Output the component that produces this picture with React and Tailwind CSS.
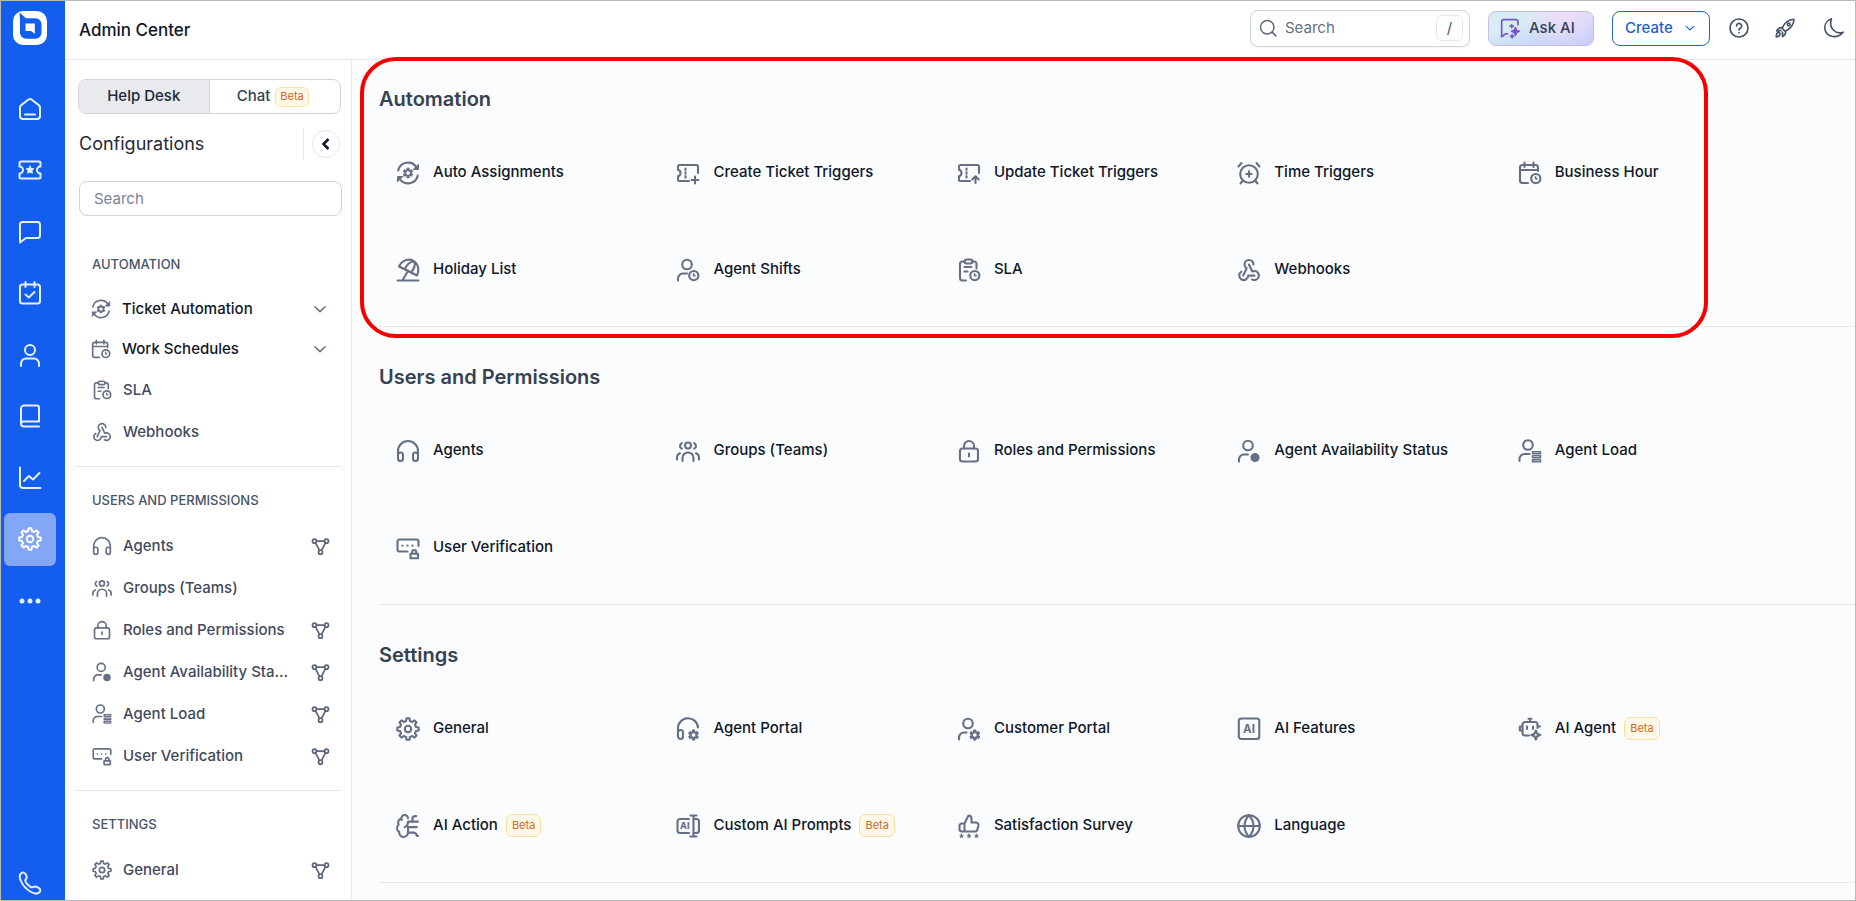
import React, { useState } from 'react'
import clsx from 'clsx'

// outline of a cog with its centre at cx, cy
function gearPath(cx, cy, teeth, outer, inner) {
  const step = (Math.PI * 2) / teeth
  const points = []
  for (let i = 0; i < teeth; i++) {
    const a = i * step - Math.PI / 2
    const corners = [[-0.3, inner], [-0.17, outer], [0.17, outer], [0.3, inner]]
    corners.forEach(([off, r]) => {
      points.push(`${(cx + r * Math.cos(a + off * step)).toFixed(2)} ${(cy + r * Math.sin(a + off * step)).toFixed(2)}`)
    })
  }
  return `M${points.join('L')}Z`
}

function starPath(cx, cy, r) {
  const points = []
  for (let i = 0; i < 10; i++) {
    const a = (i * Math.PI) / 5 - Math.PI / 2
    const d = i % 2 ? r * 0.5 : r
    points.push(`${(cx + d * Math.cos(a)).toFixed(2)} ${(cy + d * Math.sin(a)).toFixed(2)}`)
  }
  return `M${points.join('L')}Z`
}

const smallGear = (cx, cy) => <path d={gearPath(cx, cy, 6, 4.6, 2.7)} strokeWidth="1.9" />

const smallClock = (
  <>
    <circle cx="17.8" cy="17.6" r="4.6" />
    <path d="M17.6 15.8v2h1.5" strokeWidth="1.5" />
  </>
)

const ticket = <path d="M22 12V5.5A1.5 1.5 0 0 0 20.5 4H3.6A1.6 1.6 0 0 0 2 5.6V8.8a3.3 3.3 0 0 1 0 6.4v3.2A1.6 1.6 0 0 0 3.6 20H13M9.5 7.5v1.5M9.5 11.3v1.5M9.5 15.1v1.5" />

const headset = <path d="M2 18v-6a10 10 0 0 1 20 0v6M2 17.5v-1.5a2.5 2.5 0 0 1 5 0v3.500a2.500 2.500 0 0 1-5 0zM22 17.500v-1.500a2.500 2.500 0 0 0-5 0v3.500a2.500 2.500 0 0 0 5 0z" />

const icons = {
  autoAssign: (
    <>
      <path d="M2.2 9.5A10 10 0 0 1 20.5 6.5M21.8 14.5A10 10 0 0 1 3.5 17.5" />
      <path d="M22.5 3.5v5h-5zM1.5 20.5v-5h5z" fill="currentColor" strokeWidth="1" />
      <path d={gearPath(12, 12, 6, 4.4, 2.6)} strokeWidth="1.7" />
    </>
  ),
  ticketPlus: <>{ticket}<path d="M19 15.5v7M15.5 19h7" /></>,
  ticketUp: <>{ticket}<path d="M18.5 22v-6.5M15.3 18.5l3.2-3.2 3.2 3.2" /></>,
  alarm: (
    <>
      <circle cx="12" cy="13" r="8.8" />
      <path d="M12 10.3v5.4M9.3 13h5.4M1.5 5.5L4.5 2M22.5 5.5L19.5 2M5.5 20L3.5 22.5M18.5 20l2 2.5" />
    </>
  ),
  calendarClock: (
    <>
      <path d="M10 22H4.5A2.5 2.5 0 0 1 2 19.5V6.5A2.5 2.5 0 0 1 4.5 4h13A2.5 2.5 0 0 1 20 6.5V10M2 9h18M6.5 1.5v4.5M15.5 1.5v4.5" />
      {smallClock}
    </>
  ),
  umbrella: (
    <path d="M3 8.5C6.5 1.5 14 0 18.5 3.5c4.5 3.5 4.5 9.5 2.5 14zM3 8.5c4 1.5 14 7 18 9M9 11.5c1-4 5-8.5 9.5-8M15 14.8c3-4 4.5-8.5 3.5-11.3M12 13L6.5 22.3M1.5 22.5h21" />
  ),
  agentClock: (
    <>
      <circle cx="11" cy="6.5" r="4.8" />
      <path d="M2 22.5v-2a5 5 0 0 1 5-5h4" />
      {smallClock}
    </>
  ),
  clipboardClock: (
    <>
      <path d="M15.5 3.5h1.5A2.5 2.5 0 0 1 19.5 6v4.5M8 3.5H5.5A2.5 2.5 0 0 0 3 6v14A2.5 2.5 0 0 0 5.5 22.5H9M7.5 9h7M7.5 13.5h3" />
      <rect x="7.5" y="1.5" width="8" height="4" rx="2" />
      {smallClock}
    </>
  ),
  webhook: (
    <>
      <path d="M4.4 13.7a4.5 4.5 0 1 0 6.8 3.9H17.5" />
      <path d="M15 21.3a4.5 4.5 0 1 0 2.5-8.3c-.8 0-1.6.2-2.2.5L12 6.5" />
      <path d="M16.5 6.5a4.5 4.5 0 1 0-9 0c0 1.7.8 3.2 2.1 4L6.2 17.5" />
    </>
  ),
  headset,
  groups: (
    <>
      <circle cx="12" cy="6.5" r="3" />
      <path d="M6.5 22v-3a5.5 5.5 0 0 1 11 0v3M1 20.5v-2a4.5 4.5 0 0 1 3-4.2M23 20.5v-2a4.5 4.5 0 0 0-3-4.2M5.8 4.2a3 3 0 0 0 0 5.5M18.2 4.2a3 3 0 0 1 0 5.5" />
    </>
  ),
  lock: (
    <>
      <rect x="3" y="9.5" width="18" height="13" rx="2.5" />
      <path d="M7 9.5V7a5 5 0 0 1 10 0v2.5M12 14.5v3" />
    </>
  ),
  agentStatus: (
    <>
      <circle cx="11" cy="6.5" r="4.8" />
      <path d="M2 22.5v-2a5 5 0 0 1 5-5h4" />
      <circle cx="18" cy="18.5" r="3.5" fill="currentColor" />
    </>
  ),
  agentLoad: (
    <>
      <circle cx="10" cy="6" r="4.8" />
      <path d="M1.5 22v-2a5 5 0 0 1 5-5h5" />
      <path d="M14.5 12.8h8v2h-8zM14.5 16.8h8v2h-8zM14.5 20.8h8v2h-8z" strokeWidth="1.5" />
    </>
  ),
  verification: (
    <>
      <path d="M11.5 15.5H3.5a2 2 0 0 1-2-2V5.5a2 2 0 0 1 2-2h17a2 2 0 0 1 2 2v4.5M6.5 9.6v.1M11.5 9.6v.1M16.5 9.6v.1" />
      <path d="M14.5 17.8h7.5v4.5h-7.5zM16.2 17.5v-1.5a2 2 0 0 1 4 0v1.5" />
    </>
  ),
  gear: (
    <>
      <path d={gearPath(12, 12, 8, 10.8, 8.2)} />
      <circle cx="12" cy="12" r="3.2" />
    </>
  ),
  agentPortal: (
    <>
      <path d="M22 10.5A10 10 0 0 0 2 12v7.5a2.5 2.5 0 0 0 5 0v-4a2.5 2.5 0 0 0-5 0" />
      {smallGear(17.5, 18)}
    </>
  ),
  customerPortal: (
    <>
      <circle cx="11" cy="6.5" r="4.8" />
      <path d="M2 22.5v-2a5 5 0 0 1 5-5h2.5" />
      {smallGear(17.8, 18)}
    </>
  ),
  aiBox: (
    <>
      <rect x="1.8" y="1.5" width="20.5" height="20.5" rx="2.5" />
      <text x="12" y="16" textAnchor="middle" fontSize="11.5" fontWeight="700" fill="currentColor" stroke="none">AI</text>
    </>
  ),
  robot: (
    <>
      <path d="M12 5V1.8M10.5 1.8h3M11 18.5H7A2.5 2.5 0 0 1 4.5 16V7.5A2.5 2.5 0 0 1 7 5h10a2.5 2.5 0 0 1 2.5 2.5V11M9 9.5v2.5M15 9.5v2.5M4.5 9.5H1.8v4h2.7M19.5 9.5H22" />
      <path d="M17.8 13.5l1.3 3.2 3.2 1.3-3.2 1.3-1.3 3.2-1.3-3.2-3.2-1.3 3.2-1.3z" />
    </>
  ),
  brain: (
    <g transform="translate(-1.2 -1.2) scale(1.1)">
      <path d="M12 5a3 3 0 1 0-5.997.125 4 4 0 0 0-2.526 5.77 4 4 0 0 0 .556 6.588A4 4 0 1 0 12 18M9 13a4.5 4.5 0 0 0 3-4M6.003 5.125A3 3 0 0 0 6.401 6.5M12 13h8M12 18h5a3 3 0 0 1 3 3h1M12 8h9M16 8V5.500a2.500 2.500 0 0 1 2.500-2.500h1M12 13v5" strokeWidth="1.9" />
    </g>
  ),
  aiPrompt: (
    <>
      <path d="M13 19H4a2.5 2.5 0 0 1-2.5-2.5v-9A2.5 2.5 0 0 1 4 5h9M17.5 1.5v21M14.5 1.5h6M14.5 22.5h6M19 5h1.5A2.5 2.5 0 0 1 23 7.5v9a2.5 2.5 0 0 1-2.5 2.5H19" />
      <text x="8.8" y="15.2" textAnchor="middle" fontSize="9" fontWeight="800" fill="currentColor" stroke="none">AI</text>
    </>
  ),
  survey: (
    <>
      <path d="M7.5 9.5l4-8c1.8 0 3 1.2 3 3v4h4.5a2.5 2.5 0 0 1 2.4 3l-1 4a2.5 2.5 0 0 1-2.4 2H7.5zM7.5 9.5H5a2.5 2.5 0 0 0-2.5 2.5v3A2.5 2.5 0 0 0 5 17.5h2.5" />
      <path d={`${starPath(4.5, 22, 1.9)}${starPath(12, 22, 1.9)}${starPath(19.5, 22, 1.9)}`} fill="currentColor" strokeWidth="0.8" />
    </>
  ),
  globe: (
    <>
      <circle cx="12" cy="12" r="10.8" />
      <path d="M1.2 12h21.6M12 1.2c-6 6.5-6 15 0 21.6M12 1.2c6 6.5 6 15 0 21.6" />
    </>
  ),
  flow: (
    <>
      <circle cx="3.5" cy="4.5" r="2.8" />
      <circle cx="20.5" cy="4.5" r="2.8" />
      <circle cx="12" cy="20" r="2.8" />
      <path d="M6.3 4.5h11.4M5 7l5.5 10.5M19 7l-5.5 10.5" />
    </>
  ),
  chevronDown: <path d="M3 8l9 8.5L21 8" />,
  home: <path d="M2 10.5a3 3 0 0 1 1.2-2.4L10.5 2.5a2.5 2.5 0 0 1 3 0l7.3 5.6a3 3 0 0 1 1.2 2.4V19a3 3 0 0 1-3 3H5a3 3 0 0 1-3-3zM7 17.5h10" />,
  ticketStar: (
    <>
      <path d="M3 3.5h18a1.5 1.5 0 0 1 1.5 1.5V8.5a3.5 3.5 0 0 0 0 7v3.500a1.500 1.500 0 0 1-1.500 1.500H3A1.500 1.500 0 0 1 1.500 19V15.500a3.500 3.500 0 0 0 0-7V5A1.500 1.500 0 0 1 3 3.500z" />
      <path d={starPath(12, 12, 4)} fill="currentColor" strokeWidth="1" />
    </>
  ),
  chat: <path d="M2 22.5V4.5A2.5 2.5 0 0 1 4.5 2h15A2.5 2.5 0 0 1 22 4.5V15.5a2.5 2.5 0 0 1-2.5 2.5H8z" />,
  calendarCheck: <path d="M4.5 3.5h15A2.5 2.5 0 0 1 22 6v14a2.5 2.5 0 0 1-2.5 2.5h-15A2.5 2.5 0 0 1 2 20V6A2.5 2.5 0 0 1 4.5 3.5zM7.5 1v5M16.5 1v5M7.5 13.5l3.3 3L16.5 11" />,
  user: (
    <>
      <circle cx="12" cy="7" r="5" />
      <path d="M3 23v-2.5a5 5 0 0 1 5-5h8a5 5 0 0 1 5 5V23" />
    </>
  ),
  book: <path d="M21 17.5V3.5A2 2 0 0 0 19 1.5H6A3 3 0 0 0 3 4.5v15a3 3 0 0 0 3 3h15M3 19.8a2.5 2.5 0 0 1 2.5-2.3H21" />,
  chart: <path d="M2 1.5V19a3 3 0 0 0 3 3h17.5M6 15l5-5 4 3.5L21.5 7" />,
  dots: (
    <g fill="currentColor" stroke="none">
      <circle cx="4" cy="12" r="2.5" />
      <circle cx="12" cy="12" r="2.5" />
      <circle cx="20" cy="12" r="2.5" />
    </g>
  ),
  phone: <path d="M3 2.5c1.5-1.5 3.5-1 4.5.5l1 2c.8 1.5.2 2.500-.8 3.500-1 1-.5 2.200 1.500 4.500 2.200 2.400 4 3.800 5.500 3.200 1.300-.7 2.300-1.200 3.500-.6l2.800 1.600c1.500 1 1.800 2.800.5 4-2 2-5.500 1.500-8.500-.2-4.500-2.600-8.500-7-10.300-11.500C1.500 6.800 1.500 4 3 2.500z" />,
  search: (
    <>
      <circle cx="11" cy="11" r="9" />
      <path d="M17.5 17.5L22.5 22.5" />
    </>
  ),
  askAi: (
    <>
      <path d="M21.5 8V4.5A2.5 2.5 0 0 0 19 2H4.5A2.5 2.5 0 0 0 2 4.5v18L6.5 19H9" />
      <path d="M18.5 11.5l1.3 3.2 3.2 1.3-3.2 1.3-1.3 3.2-1.3-3.2-3.2-1.3 3.2-1.3z" fill="currentColor" />
      <path d="M14 7.8v4M12 9.8h4M14.5 20v4M12.5 22h4" />
    </>
  ),
  help: (
    <>
      <circle cx="12" cy="12" r="10.8" />
      <path d="M9 9.5a3.1 3.1 0 1 1 4.8 2.6c-1 .7-1.8 1.1-1.8 2.2M12 17.5v.1" />
    </>
  ),
  rocket: (
    <>
      <path d="M8.5 12.5C11 6 15.5 2 22.8 1.5 22.5 8.5 18.5 13 12 15.8zM8.8 11.5c-3-.3-5.3.8-6.8 4l5-.3M12.8 15.5c.3 3-.8 5.3-3.8 6.8V17M1.5 22.8c0-3 .5-4.8 2-5.5 1.5-.5 3 .8 2.500 2.500-.5 1.800-2 2.700-4.500 3z" />
      <circle cx="16.5" cy="7.8" r="1.6" />
    </>
  ),
  moon: <path d="M9 1C2.5 3.5-.5 9 1.5 15c2.5 8 14.5 10.5 21.5 2C14 20 5 12.5 9 1z" />,
}

function Icon({ name, className = 'size-6', stroke = 2 }) {
  return (
    <svg className={clsx('shrink-0 overflow-visible', className)} viewBox="0 0 24 24" fill="none" stroke="currentColor" strokeWidth={stroke} strokeLinecap="round" strokeLinejoin="round" aria-hidden="true">
      {icons[name]}
    </svg>
  )
}

const rail = [
  { icon: 'home', label: 'Home' },
  { icon: 'ticketStar', label: 'Tickets' },
  { icon: 'chat', label: 'Chat' },
  { icon: 'calendarCheck', label: 'Activities' },
  { icon: 'user', label: 'Contacts' },
  { icon: 'book', label: 'Knowledge base' },
  { icon: 'chart', label: 'Reports' },
  { icon: 'gear', label: 'Admin', active: true },
  { icon: 'dots', label: 'More' },
]

const menu = [
  {
    title: 'AUTOMATION',
    items: [
      { icon: 'autoAssign', label: 'Ticket Automation', expand: true },
      { icon: 'calendarClock', label: 'Work Schedules', expand: true },
      { icon: 'clipboardClock', label: 'SLA' },
      { icon: 'webhook', label: 'Webhooks' },
    ],
  },
  {
    title: 'USERS AND PERMISSIONS',
    items: [
      { icon: 'headset', label: 'Agents', flow: true },
      { icon: 'groups', label: 'Groups (Teams)' },
      { icon: 'lock', label: 'Roles and Permissions', flow: true },
      { icon: 'agentStatus', label: 'Agent Availability Sta...', flow: true },
      { icon: 'agentLoad', label: 'Agent Load', flow: true },
      { icon: 'verification', label: 'User Verification', flow: true },
    ],
  },
  {
    title: 'SETTINGS',
    items: [{ icon: 'gear', label: 'General', flow: true }],
  },
]

const sections = [
  {
    title: 'Automation',
    items: [
      { icon: 'autoAssign', label: 'Auto Assignments' },
      { icon: 'ticketPlus', label: 'Create Ticket Triggers' },
      { icon: 'ticketUp', label: 'Update Ticket Triggers' },
      { icon: 'alarm', label: 'Time Triggers' },
      { icon: 'calendarClock', label: 'Business Hour' },
      { icon: 'umbrella', label: 'Holiday List' },
      { icon: 'agentClock', label: 'Agent Shifts' },
      { icon: 'clipboardClock', label: 'SLA' },
      { icon: 'webhook', label: 'Webhooks' },
    ],
  },
  {
    title: 'Users and Permissions',
    items: [
      { icon: 'headset', label: 'Agents' },
      { icon: 'groups', label: 'Groups (Teams)' },
      { icon: 'lock', label: 'Roles and Permissions' },
      { icon: 'agentStatus', label: 'Agent Availability Status' },
      { icon: 'agentLoad', label: 'Agent Load' },
      { icon: 'verification', label: 'User Verification' },
    ],
  },
  {
    title: 'Settings',
    items: [
      { icon: 'gear', label: 'General' },
      { icon: 'agentPortal', label: 'Agent Portal' },
      { icon: 'customerPortal', label: 'Customer Portal' },
      { icon: 'aiBox', label: 'AI Features' },
      { icon: 'robot', label: 'AI Agent', beta: true },
      { icon: 'brain', label: 'AI Action', beta: true },
      { icon: 'aiPrompt', label: 'Custom AI Prompts', beta: true },
      { icon: 'survey', label: 'Satisfaction Survey' },
      { icon: 'globe', label: 'Language' },
    ],
  },
]

function Beta({ className }) {
  return (
    <span className={clsx('flex items-center rounded-md border border-[#fbdf9d] bg-[#fff8e8] text-[11px] font-normal text-[#c96a1b]', className)}>Beta</span>
  )
}

function Rail() {
  return (
    <nav className="flex w-16 shrink-0 flex-col items-start bg-[#135eef] pl-[3px] text-[#e6efff]" aria-label="Main">
      <a href="#" className="mt-[10px] ml-[9px]" aria-label="Home page">
        <svg className="size-[34px]" viewBox="0 0 34 34" aria-hidden="true">
          <rect width="34" height="34" rx="10" fill="#fff" />
          <path d="M6.500 1.500L13 7.300h9.500a6 6 0 0 1 6 6v8.500a6 6 0 0 1-6 6h-9.500a6 6 0 0 1-6-6V9.500z" fill="#135eef" />
          <path d="M12.500 12.500h9.300v10.300l-3.800-2.800h-5.500z" fill="#fff" />
        </svg>
      </a>
      <div className="mt-[37px] flex h-[545px] flex-col justify-between">
        {rail.map((item) => (
          <a
            key={item.label}
            href="#"
            aria-label={item.label}
            className={clsx('flex h-[53px] w-[52px] items-center justify-center rounded-md', item.active && 'bg-[#84a6f6] text-white')}
          >
            <Icon name={item.icon} />
          </a>
        ))}
      </div>
      <a href="#" aria-label="Phone" className="mt-auto flex w-[52px] justify-center pb-[5px]">
        <Icon name="phone" />
      </a>
    </nav>
  )
}

function Header() {
  return (
    <header className="flex h-[59px] shrink-0 items-center border-b border-[#e5e8ee] bg-white pr-[11px] pb-1 pl-[14px]">
      <h1 className="pt-1 text-[17px] leading-6 font-medium text-[#0f172a]">Admin Center</h1>
      <label className="ml-auto flex h-[37px] w-[220px] items-center rounded-lg border border-[#d0d5dd] pr-[6px] pl-2 shadow-xs">
        <Icon name="search" className="size-[18px] text-[#5d6779]" />
        <input type="text" placeholder="Search" aria-label="Search" className="ml-2 min-w-0 flex-1 text-[15px] text-[#364152] outline-none placeholder:text-[#667085]" />
        <kbd className="flex h-[26px] w-[27px] items-center justify-center rounded-md border border-[#e5e7eb] font-[Inter] text-[15px] text-[#475467]">/</kbd>
      </label>
      <button className="ml-[18px] flex h-[35px] w-[106px] items-center rounded-lg border border-[#cdb9ee] bg-[radial-gradient(circle_at_75%_0%,#eedbf7,transparent_55%),linear-gradient(160deg,#d6eef3_30%,#c3cdff_85%)] pl-[11px] text-[15px] font-medium text-[#344054]">
        <Icon name="askAi" className="mr-[9px] size-5 text-[#7a55c8]" />
        Ask AI
      </button>
      <button className="ml-[18px] flex h-[35px] w-[98px] items-center rounded-lg border border-[#2563cb] pl-3 text-[15px] font-medium text-[#1d5fd0]">
        Create
        <Icon name="chevronDown" className="ml-3 size-[10px]" stroke={3} />
      </button>
      <div className="ml-[19px] flex gap-[26px] text-[#475467]">
        <button aria-label="Help"><Icon name="help" className="size-5" /></button>
        <button aria-label="What's new"><Icon name="rocket" className="size-5" /></button>
        <button aria-label="Dark mode" className="ml-[3px]"><Icon name="moon" className="size-5" /></button>
      </div>
    </header>
  )
}

function SidePanel() {
  const [tab, setTab] = useState('desk')

  return (
    <aside className="flex w-[287px] shrink-0 flex-col overflow-hidden border-r border-[#e5e8ee] bg-white">
      <div className="mt-[19px] mr-[10px] ml-[13px] flex h-[35px] shrink-0 overflow-hidden rounded-lg border border-[#cfd4dc] text-[15px] font-medium">
        <button onClick={() => setTab('desk')} className={clsx('flex w-1/2 items-center justify-center border-r border-[#cfd4dc] text-[#1d2939]', tab === 'desk' && 'bg-[#e9eaee]')}>
          Help Desk
        </button>
        <button onClick={() => setTab('chat')} className={clsx('flex w-1/2 items-center justify-center gap-[5px] pr-1 text-[#344054]', tab === 'chat' && 'bg-[#e9eaee]')}>
          Chat <Beta className="h-5 px-1" />
        </button>
      </div>
      <div className="mt-[14px] mr-[11px] ml-[14px] flex h-8 shrink-0 items-center">
        <h2 className="text-lg leading-8 text-[#1f2937]">Configurations</h2>
        <div className="ml-auto h-full border-l border-[#e5e7eb]" />
        <button aria-label="Collapse" className="ml-2 flex size-7 items-center justify-center rounded-full border border-[#e5e7eb] text-[#0f172a]">
          <svg className="size-3" viewBox="0 0 12 12" fill="none" stroke="currentColor" strokeWidth="2.5" aria-hidden="true">
            <path d="M8.5 1L3.5 6l5 5" />
          </svg>
        </button>
      </div>
      <input
        type="text"
        placeholder="Search"
        aria-label="Search configurations"
        className="mt-[21px] mr-[9px] ml-[14px] h-[35px] shrink-0 rounded-lg border border-[#cfd4dc] px-[14px] text-[15px] text-[#364152] outline-none placeholder:text-[#7a8396]"
      />
      <div className="mt-[15px] mr-[10px] ml-[10px]">
        {menu.map((group) => (
          <section key={group.title} className="border-b border-[#e5e8ee] pt-[23px] pb-[13px]">
            <h3 className="mb-[15px] ml-[17px] text-[13px] leading-5 font-medium text-[#475467]">{group.title}</h3>
            <ul>
              {group.items.map((item) => (
                <li key={item.label}>
                  {item.expand ? (
                    <button className="flex h-10 w-full items-center pr-[14px] pl-4 text-[15px] font-medium text-[#0f172a]">
                      <Icon name={item.icon} className="mr-[11px] size-5 text-[#667085]" />
                      {item.label}
                      <Icon name="chevronDown" className="ml-auto size-[14px] text-[#667085]" stroke={2.5} />
                    </button>
                  ) : (
                    <a href="#" className="flex h-[42px] items-center pr-3 pl-[17px] text-[15px] font-medium text-[#3f4a5e]">
                      <Icon name={item.icon} className="mr-[11px] size-5 text-[#667085]" />
                      {item.label}
                      {item.flow && <Icon name="flow" className="ml-auto size-[17px] text-[#5d6779]" stroke={2.4} />}
                    </a>
                  )}
                </li>
              ))}
            </ul>
          </section>
        ))}
      </div>
    </aside>
  )
}

function Main() {
  return (
    <main className="min-w-0 flex-1 overflow-hidden bg-[#fafcfd] pl-[27px]">
      {sections.map((section, i) => (
        <section key={section.title} className={clsx('border-b border-[#e5e8ee] pb-2', i === 0 ? 'pt-[25px]' : 'pt-9')}>
          <h2 className="text-xl leading-7 font-semibold text-[#364152]">{section.title}</h2>
          <ul className="mt-[11px] grid w-[95%] grid-cols-5">
            {section.items.map((item) => (
              <li key={item.label}>
                <a href="#" className="flex h-[97px] items-center pl-[17px] text-[15px] font-medium whitespace-nowrap text-[#0f172a]">
                  <Icon name={item.icon} className="mr-[13px] size-6 text-[#667085]" stroke={2.1} />
                  {item.label}
                  {item.beta && <Beta className="ml-2 h-[23px] px-[5px]" />}
                </a>
              </li>
            ))}
          </ul>
        </section>
      ))}
      {/* highlight around the first section */}
      <div className="pointer-events-none fixed top-[57px] right-[148px] left-[360px] h-[281px] rounded-[36px] border-4 border-[#f60000]" />
    </main>
  )
}

export default function App() {
  return (
    <div className="flex h-screen overflow-hidden border border-[#b9b9b9] bg-white font-[Inter,sans-serif]">
      <Rail />
      <div className="flex min-w-0 flex-1 flex-col">
        <Header />
        <div className="flex min-h-0 flex-1">
          <SidePanel />
          <Main />
        </div>
      </div>
    </div>
  )
}
